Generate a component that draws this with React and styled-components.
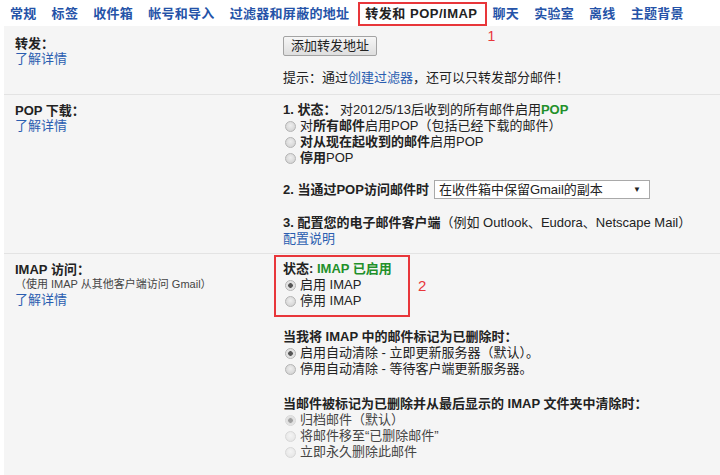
import React from "react";
import styled, { createGlobalStyle } from "styled-components";

const Global = createGlobalStyle`
  html, body {
    margin: 0;
    padding: 0;
    background: #fff;
  }
  body {
    font-family: "Liberation Sans", "Noto Sans CJK SC", sans-serif;
    font-size: 13px;
    color: #222;
  }
`;

const Page = styled.div`
  width: 720px;
  height: 475px;
  overflow: hidden;
  background: #fff;
`;

const TabBar = styled.div`
  display: flex;
  align-items: flex-start;
  height: 26px;
  box-sizing: border-box;
  padding: 2px 0 0 10px;
  white-space: nowrap;
`;

const Tab = styled.span`
  position: relative;
  font-size: 13px;
  line-height: 20px;
  font-weight: bold;
  letter-spacing: ${(p) => (p.$active ? "0.5px" : "0.3px")};
  color: ${(p) => (p.$active ? "#222" : "#2553a8")};
  padding: ${(p) => (p.$active ? "0 7px 0 5px" : "2px 0")};
  margin: ${(p) => (p.$active ? "0 6px 0 -6px" : "0 15px 0 0")};
  border: ${(p) => (p.$active ? "2px solid #e8363a" : "none")};
  cursor: pointer;
`;

const Mark = styled.span`
  position: absolute;
  left: calc(100% + 3px);
  top: calc(100% + 4px);
  font-family: "Liberation Sans", sans-serif;
  font-weight: normal;
  font-size: 14px;
  line-height: 16px;
  color: #e8363a;
`;

const Content = styled.div`
  margin-left: 4px;
  background: #f5f5f5;
  height: 449px;
`;

const Row = styled.div`
  display: grid;
  grid-template-columns: 279px 1fr;
  padding: ${(p) => p.$pt || 0}px 0 ${(p) => p.$pb || 0}px;
  border-top: ${(p) => (p.$first ? "none" : "1px solid #e3e3e3")};
`;

const Side = styled.div`
  padding: ${(p) => p.$pt || 0}px 0 0 11px;
  line-height: 15px;
`;

const Label = styled.div`
  font-weight: bold;
  color: #222;
`;

const Note = styled.div`
  font-size: 11px;
  line-height: 15px;
  color: #444;
`;

const Link = styled.a`
  color: #2a5db0;
  text-decoration: none;
  cursor: pointer;
`;

const Main = styled.div`
  line-height: 16px;
  padding-top: ${(p) => p.$pt || 0}px;
`;

const Line = styled.div`
  margin-top: ${(p) => p.$mt || 0}px;
  display: flex;
  align-items: center;
  white-space: nowrap;
`;

const B = styled.b`
  color: #222;
`;

const Green = styled.b`
  color: #22902a;
`;

const Button = styled.button`
  height: 20px;
  padding: 0 7px;
  font-family: inherit;
  font-size: 13px;
  line-height: 18px;
  color: #222;
  background: linear-gradient(#f6f6f6, #dedede);
  border: 1px solid #a3a3a3;
  border-radius: 2px;
`;

const RadioDot = styled.span`
  width: 11px;
  height: 11px;
  box-sizing: border-box;
  border-radius: 50%;
  margin: 0 4px 0 2px;
  flex: none;
  border: 1px solid ${(p) => (p.$disabled ? "#d8d8d8" : "#b4b4b4")};
  background: ${(p) =>
    p.$checked
      ? `radial-gradient(circle, ${p.$disabled ? "#a0a0a0" : "#555"} 0 2px, #dcdcdc 2.6px, #f2f2f2 100%)`
      : p.$disabled
      ? "radial-gradient(circle at 50% 40%, #f4f4f4, #e2e2e2)"
      : "radial-gradient(circle at 50% 40%, #eeeeee, #cdcdcd)"};
`;

const RadioText = styled.span`
  color: ${(p) => (p.$disabled ? "#444" : "#222")};
`;

const Radio = ({ checked, disabled, children }) => (
  <Line>
    <RadioDot $checked={checked} $disabled={disabled} />
    <RadioText $disabled={disabled}>{children}</RadioText>
  </Line>
);

const Select = styled.div`
  display: flex;
  align-items: center;
  justify-content: space-between;
  width: 216px;
  height: 19px;
  box-sizing: border-box;
  margin-left: 5px;
  padding: 0 8px 0 4px;
  background: #fff;
  border: 1px solid #a9a9a9;
  color: #222;
`;

const Arrow = styled.span`
  font-size: 8px;
  color: #222;
`;

const StatusRow = styled.div`
  display: flex;
  align-items: center;
`;

const RedBox = styled.div`
  width: 136px;
  box-sizing: border-box;
  margin-left: -9px;
  padding: 4px 0 6px 7px;
  border: 2px solid #e8363a;
`;

const BoxMark = styled.span`
  margin-left: 8px;
  font-size: 15px;
  color: #e8363a;
`;

export default function App() {
  return (
    <Page>
      <Global />
      <TabBar>
        <Tab>常规</Tab>
        <Tab>标签</Tab>
        <Tab>收件箱</Tab>
        <Tab>帐号和导入</Tab>
        <Tab>过滤器和屏蔽的地址</Tab>
        <Tab $active>
          转发和 POP/IMAP
          <Mark>1</Mark>
        </Tab>
        <Tab>聊天</Tab>
        <Tab>实验室</Tab>
        <Tab>离线</Tab>
        <Tab>主题背景</Tab>
      </TabBar>

      <Content>
        <Row $first $pt={10} $pb={8}>
          <Side>
            <Label>转发：</Label>
            <Link>了解详情</Link>
          </Side>
          <Main>
            <Line>
              <Button>添加转发地址</Button>
            </Line>
            <Line $mt={14}>
              提示：通过<Link>创建过滤器</Link>，还可以只转发部分邮件！
            </Line>
          </Main>
        </Row>

        <Row $pt={7} $pb={6}>
          <Side $pt={1}>
            <Label>POP 下载：</Label>
            <Link>了解详情</Link>
          </Side>
          <Main>
            <Line>
              <B>1. 状态：</B>&nbsp;对2012/5/13后收到的所有邮件启用<Green>POP</Green>
            </Line>
            <Radio>
              对<B>所有邮件</B>启用POP（包括已经下载的邮件）
            </Radio>
            <Radio>
              <B>对从现在起收到的邮件</B>启用POP
            </Radio>
            <Radio>
              <B>停用</B>POP
            </Radio>
            <Line $mt={14}>
              <B>2. 当通过POP访问邮件时</B>
              <Select>
                <span>在收件箱中保留Gmail的副本</span>
                <Arrow>▼</Arrow>
              </Select>
            </Line>
            <Line $mt={16}>
              <B>3. 配置您的电子邮件客户端</B>（例如 Outlook、Eudora、Netscape Mail）
            </Line>
            <Line>
              <Link>配置说明</Link>
            </Line>
          </Main>
        </Row>

        <Row $pt={1}>
          <Side $pt={7}>
            <Label>IMAP 访问：</Label>
            <Note>（使用 IMAP 从其他客户端访问 Gmail）</Note>
            <Link>了解详情</Link>
          </Side>
          <Main>
            <StatusRow>
              <RedBox>
                <Line>
                  <B>状态:</B>&nbsp;<Green>IMAP 已启用</Green>
                </Line>
                <Radio checked>启用 IMAP</Radio>
                <Radio>停用 IMAP</Radio>
              </RedBox>
              <BoxMark>2</BoxMark>
            </StatusRow>
            <Line $mt={12}>
              <B>当我将 IMAP 中的邮件标记为已删除时：</B>
            </Line>
            <Radio checked>启用自动清除 - 立即更新服务器（默认）。</Radio>
            <Radio>停用自动清除 - 等待客户端更新服务器。</Radio>
            <Line $mt={19}>
              <B>当邮件被标记为已删除并从最后显示的 IMAP 文件夹中清除时：</B>
            </Line>
            <Radio checked disabled>
              归档邮件（默认）
            </Radio>
            <Radio disabled>将邮件移至“已删除邮件”</Radio>
            <Radio disabled>立即永久删除此邮件</Radio>
          </Main>
        </Row>
      </Content>
    </Page>
  );
}
